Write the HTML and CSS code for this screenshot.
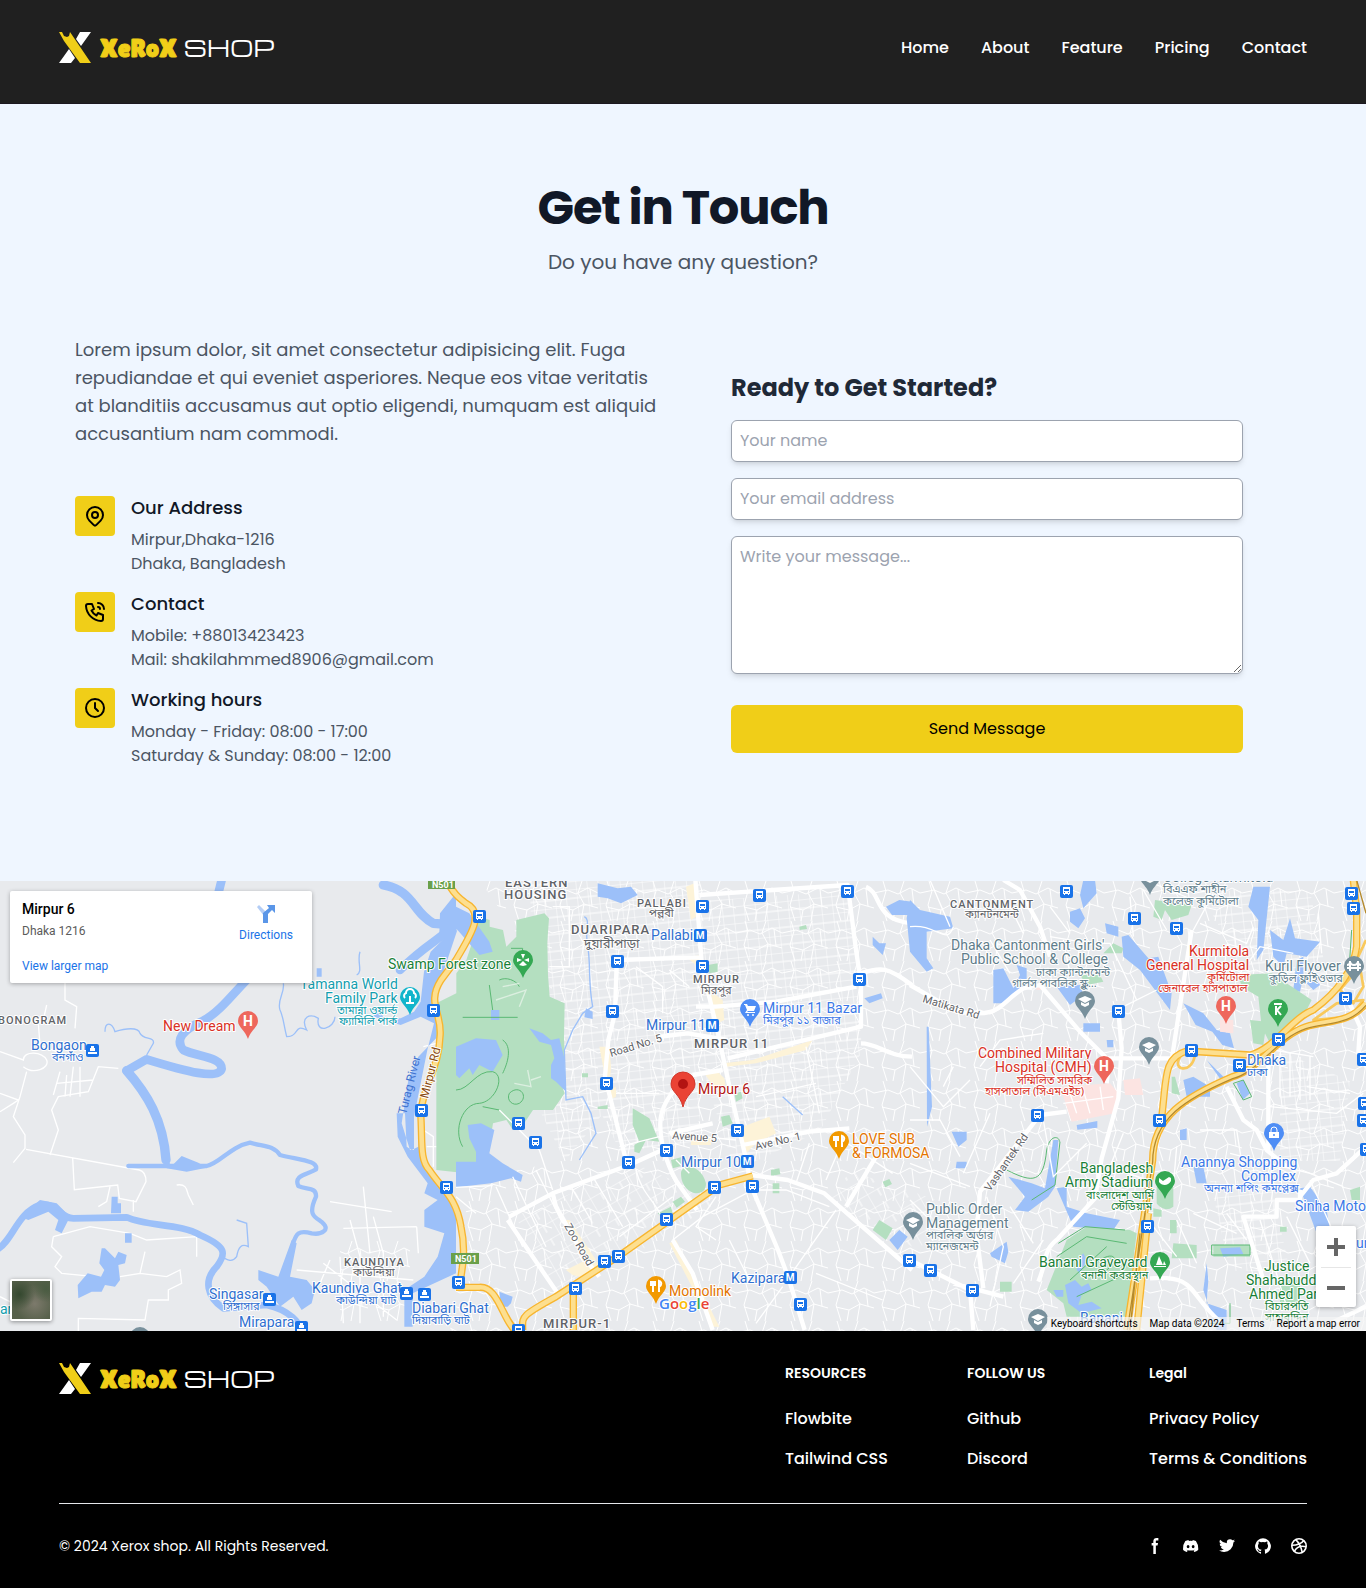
FILE: index.html
```html
<!DOCTYPE html>
<html lang="en">
<head>
<meta charset="utf-8">
<meta name="viewport" content="width=device-width, initial-scale=1">
<title>Xerox Shop - Contact</title>
<link rel="stylesheet" href="styles.css">
</head>
<body>
<header class="header">
  <div class="container header-row">
    <a class="logo" href="#" aria-label="Xerox Shop">
      <svg class="logo-mark" viewBox="0 0 32 32" aria-hidden="true"><path fill="#fff" d="M21 0h11L22 14l-5-7zM0 31l10-14 6 9-4 5z"/><path fill="#f0ce18" d="M0 0h3l2 4 3 1 2-1 1-4 21 31H21L5 9z"/></svg>
      <span class="logo-x">XeRoX</span><span class="logo-shop">SHOP</span>
    </a>
    <nav class="nav">
      <a href="#">Home</a><a href="#">About</a><a href="#">Feature</a><a href="#">Pricing</a><a href="#">Contact</a>
    </nav>
  </div>
</header>

<main>
  <section class="contact">
    <div class="intro">
      <h1>Get in Touch</h1>
      <p>Do you have any question?</p>
    </div>
    <div class="columns">
      <div class="info">
        <p class="lead">Lorem ipsum dolor, sit amet consectetur adipisicing elit. Fuga repudiandae et qui eveniet asperiores. Neque eos vitae veritatis at blanditiis accusamus aut optio eligendi, numquam est aliquid accusantium nam commodi.</p>
        <ul class="details">
          <li>
            <span class="badge"><svg viewBox="0 0 24 24"><circle cx="12" cy="11" r="3"/><path d="M17.657 16.657 13.414 20.9a2 2 0 0 1-2.827 0l-4.244-4.243a8 8 0 1 1 11.314 0z"/></svg></span>
            <div><h2>Our Address</h2><p>Mirpur,Dhaka-1216</p><p>Dhaka, Bangladesh</p></div>
          </li>
          <li>
            <span class="badge"><svg viewBox="0 0 24 24"><path d="M5 4h4l2 5-2.500 1.500a11 11 0 0 0 5 5L15 13l5 2v4a2 2 0 0 1-2 2A16 16 0 0 1 3 6a2 2 0 0 1 2-2M15 7a2 2 0 0 1 2 2M15 3a6 6 0 0 1 6 6"/></svg></span>
            <div><h2>Contact</h2><p>Mobile: +88013423423</p><p>Mail: shakilahmmed8906@gmail.com</p></div>
          </li>
          <li>
            <span class="badge"><svg viewBox="0 0 24 24"><circle cx="12" cy="12" r="9"/><path d="M12 7v5l3 3"/></svg></span>
            <div><h2>Working hours</h2><p>Monday - Friday: 08:00 - 17:00</p><p>Saturday &amp; Sunday: 08:00 - 12:00</p></div>
          </li>
        </ul>
      </div>
      <form class="form">
        <h2>Ready to Get Started?</h2>
        <input type="text" placeholder="Your name" aria-label="Your name">
        <input type="email" placeholder="Your email address" aria-label="Your email address">
        <textarea placeholder="Write your message..." aria-label="Write your message"></textarea>
        <button type="button">Send Message</button>
      </form>
    </div>
  </section>

  <section class="map" aria-label="Map of Mirpur 6">
    <svg class="canvas" viewBox="0 0 1366 450" preserveAspectRatio="xMidYMid slice">
      <defs>
        <pattern id="blocks" width="11" height="17" patternUnits="userSpaceOnUse" patternTransform="rotate(-6)"><path class="lane" d="M0 0h11M0 0v17M0 9h11"/></pattern>
        <pattern id="blocks-tilt" width="22" height="15" patternUnits="userSpaceOnUse" patternTransform="rotate(-30)"><path class="lane" d="M0 0h22M0 0v15M12 0v8"/></pattern>
        <pattern id="lanes" width="46" height="40" patternUnits="userSpaceOnUse"><path class="lane" d="M0 12l14-3 10 4 12-6 10 5M9 0l3 10-4 14 5 16M30 0l-4 12 6 11-3 17M8 26l13 3 11-6 14 4M21 29l-2 11M38 8l2 17"/></pattern>
        <g id="bus"><rect class="stop" x="-6" y="-6" width="13" height="13" rx="2"/><path fill="#fff" d="M-3-4h7v7h-1v1h-1v-1h-3v1h-1v-1h-1z"/><path fill="#1a73e8" d="M-2-2h5v2h-5zM-2 1h1v1h-1zM2 1h1v1h-1z"/></g>
        <g id="ferry"><rect class="stop" x="-6" y="-6" width="13" height="13" rx="2"/><path fill="#fff" d="M-1-4h3v2h1v3h-5v-3h1zM-4 2h9v2h-9z"/></g>
        <g id="metro"><rect class="stop" x="-6" y="-6" width="13" height="13" rx="2"/><text class="glyph" x="0" y="4">M</text></g>
        <path id="pin" d="M0-10a10 10 0 0 1 10 10c0 6-7 9-10 18C-3 9-10 6-10 0A10 10 0 0 1 0-10z"/>
        <g id="school"><use href="#pin" fill="#78909c"/><path fill="#fff" d="M0-5l7 3-7 4-7-4zM-4 1l4 2 4-2v3l-4 2-4-2z"/></g>
        <g id="hospital"><use href="#pin" fill="#ee675c"/><text class="glyph big" x="0" y="5">H</text></g>
        <g id="food"><use href="#pin" fill="#f29900"/><path fill="none" stroke="#fff" stroke-width="2" d="M-3-5v11M-5-5v4h4v-4M3 6V-5c3 1 3 4 0 6"/></g>
      </defs>
      <rect width="1366" height="450" fill="#e8eaed"/>
      <path fill="url(#lanes)" d="M480 0H1366V450H450L470 300 560 280 550 100z"/>
      <path fill="url(#blocks)" d="M565 0H700V260L620 270 560 150zM700 20L850 10 862 170 820 250 735 290 690 150zM530 0h35v150l40 80-40 50-30-60zM1200 10l110 0 20 100-60 30zM1280 170l70 30-10 80-60 0zM1210 300l60 0 20 90-60 0z"/>
      <path fill="url(#blocks-tilt)" d="M515 335L640 285 720 320 560 420zM850 290l90 30-20 50-90-50z"/>
      <path fill="url(#lanes)" d="M340 360h70v80h-70z"/>

      <svg class="tile" x="0" y="-1" width="456" height="450" viewBox="0 0 1368 1350">
        <path class="minor" d="M195 300v60l35 20-5 65M140 375l-10 45-15 10 5 65 50 20M0 515l70 25c0-30 60-25 70 0 10 25-40 45-70 20M80 575L60 650 40 710l35 55v40L40 848M0 640l55 20-15 10-40 25M78 808l340 62c20 5 20 25 20 35l-30 60-50-10-5-40-130 14-5-95M150 825l25-75-20-60 20-40 90-15 30-75 60 5M180 575l-20 70M200 585l-5 65M220 560l-10 90M240 560v90M170 610l110-10M530 915c30-5 30 15 35 30l15 30M330 920l-10 45-25 15M400 960v35M990 965l185 30M1090 920l20 200M1030 1045l220-5M1050 1020l30 110M1120 1010l30 110M1250 1040l5 80M970 1150l220 170M890 1170l350 30M960 1210l30-70M1020 1130l10 200M1080 1130v200M1150 1110v200M160 1070l110-30 120 20 50 20 150-10v60M160 1070l-5 30 30 30-20 30 20 20 100 10M360 1190l60-10 15-65M420 1180l80 10 40-20 5 40-40 20v30l-60 0-10 60-200-5v60M0 1250l40 20M1270 500l60-15M1270 750l30 20v90M1280 800h35"/>
        <path class="brook" d="M315 455c0-30 20-30 30 0 30-10 70-15 75 5 10 20 45 10 40 30l-20 35M850 310c5 30-20 50-10 80 10 20 10 40 20 80 40 0 20-40 60-20-20-40 10-50 35-35-10 50 50 30 50-5M1080 215c-10 30 10 60-10 70M630 1180c-10 20 10 50 15 80M710 1020l30 10 5 70c-20-10-30 0-35 30-15 20-30 10-50-5"/>
        <path class="water" stroke-width="26" d="M665 0l-15 60M740 300C700 340 660 395 610 422 545 450 525 480 550 510 590 530 665 530 665 566 655 600 560 575 440 538L380 572M1200 270C1280 190 1320 180 1368 130"/>
        <path class="water" stroke-width="28" d="M380 572C440 640 490 720 498 840M1150 15C1240 30 1240 100 1300 130L1368 135"/>
        <path class="water" stroke-width="13" d="M385 858L620 858C660 850 690 800 750 788 790 800 820 795 840 825 900 840 955 842 948 868 920 885 880 885 895 918 920 930 950 920 948 950 925 1000 940 1010 960 1022 1000 1050 960 1065 935 1060 895 1050 888 1060 878 1095"/>
        <path class="water" stroke-width="20" d="M-10 1110C40 1080 50 1000 120 975 170 965 180 1015 220 1015L380 1012C440 1040 540 1030 600 1065 680 1100 680 1120 650 1160 610 1200 620 1250 670 1285L800 1275C870 1290 900 1330 910 1360"/>
        <path class="lake" d="M495 830l20 28 30-30 50 20 25 15-60 12-60-10zM875 1080l15 10-20 100 50 10 25 30-10 40-30 20-25-40-40 30-40-60-25-20 0-30 60 20zM60 1010l60-50 50 10 40 40-25 50-20-10 10-30-30-25-60 25zM335 950h18v20h10l0 30h-30zM375 1060h20v28h-20zM305 1105l10 0 30 30 10-20 25 10-5 25-20 5 5 45-15 20-30-5-10 20-30 0-40 20-2-40 30-35 40 10 10-20-15-20zM950 265h15v25h-15z"/>
        <path class="lake" d="M1255 530l-30 70-20 130 25 80h12l0-100 40-200 20-80-40-20-60 25-80-25-5-30 15 0 20 35 50 0 40-20 20-30 10-90 20-60 60-60 20-5-50 150-20 90 30 60zM1190 700l25 0 5 100 15 10 20-10 0-80 15 140 98 100v220l-130 60v100h-25v-110l60-40 40-60 20-70-60-20 0-50 40-30-40-20 10-30-60-80-30-60z"/>
        <path class="lake" d="M1320 100l48-60v120l-50 0zM1325 510l40 0-20 30-20 0z"/>
        <path class="park" d="M1320 395l48-10v75l-45-10zM1330 560l38 20v275h-48z"/>
        <path class="park-line" d="M1340 850c-10-60 5-130-5-180 0-20 20-40 33-38"/>
      </svg>

      <svg class="tile" x="456" y="-1" width="456" height="450" viewBox="0 0 1368 1350">
        <path class="park" d="M265 100l14 15-5 70 2 100 5 65 45 20-2 100 2 60-25 40 25 70-35 50-60 0-40 60-20 0-20-30-40 10-20 130-60 20-90-10V370l60-30 0-60 30-40 20-60 0-20 20-50 30 10 0 20 40 10 10 50 30-30 0-50z"/>
        <path class="lake" d="M0 80l40 20 60 85 10 30-40 10-70-80zM0 500l60-25 60 5 20 45-30 50-40-20-20 30-10-20-30 30-10-10zM220 445l40 15 25 20 25-5 15 60 5 100-30-30-15-10 0-40 10-20-10-40-35-10zM35 735l40-5 40 20-15 70 40 30 60 35-5 20-30-10-60 15L0 922V845l60 0 0-30-20-40zM425 10l60 15 40-5 20 25-50 25-40-15-30-5zM105 390h25v30h-25zM390 385l20 10v22l-25-5zM1290 80l40-20 38 5v40l-60 0zM1250 170l20 20 20 0-10 35-30-30zM1225 355l50-15 5 15-40 15zM1300 1080l30-30 25 20-30 40zM130 1235l40 15-5 20-10 10-20 0z"/>
        <path class="park" d="M530 685l50 30 30 70-40-5-20 40-15-5 0-20 15-10-20-50zM675 880c0-30 60-30 75 30 0 30-25 35-45 25-20-10-30-30-30-55zM645 840l35-10 8 25-38 10zM755 255l30-5 0 25-25 5zM795 710l25-5 10 25-30 10zM835 640l20-5 5 20-20 10zM945 870l25-5 3 18-28 5zM950 910h20v30h-20zM650 965l25-15 12 15-25 18zM605 1000l40-20 5 20-35 10zM1250 1050l20-30 40 25 -20 35zM1280 905l20-8 8 15-20 10zM1030 140l20-5 3 12-22 3zM425 680l30-5v12h-30zM378 580h18v12h-18z"/>
        <path class="town" d="M690 20l25-10 5 100-15 10zM760 330l40 30 5 60-30 15zM800 550l90-10 180-60-20 30-150 40-90 10zM745 580l40-5 20 20 5 30-30 5zM860 740l80-30 20 50-60 30-40 40zM430 500h30l5 60-5 70 20-10 0 30-20 10zM705 770h60v25h-60zM330 1170l60-30 50 10-10 30-60 10-20-5zM640 1090l20-10 130 260h-20zM320 1020l20 0 80 120-20 10zM690 230l50-5 0 30-20 0z"/>
        <path class="brook" d="M385 110c20 10 0 40 10 90 10 50 0 100 15 180l-30 20-30 50-25 60 5 150 50-10 25 50 15 60-50 80M980 650l60 55"/>
        <path class="park-line" d="M0 630c40 0 60-60 110-55 40 10 10 90-40 95-50 0-80 80-50 130M20 412l165 0M100 315l10 75M140 480c30 20 15 70 0 100M160 640c30-30 60 10 30 30-20 10-40-10-30-30M165 205h35l-5 40M80 680l50 10M130 300c20-10 50 0 60 20"/>
        <path class="path" d="M120 360l90-30-20 50M215 570l10 50-50-10M225 600l30-10M140 320l50-10"/>
        <path class="minor" d="M130 690l60 60 60 60 40 120M160 1010l0 20 60 80M290 80h50v180h-60M0 922l110-5M60 1000l-60-50M120 920l80 180M170 890l100 210M240 870l80 160M345 920l60 100M410 890l90 150M490 1070l160-120M520 1100l150-110M540 870c20 80 60 90 80 150M900 650l180-40M1050 500l40 200M1130 760l180 120M1020 910l40-120M1110 900l60-140M540 260l80 60v80M640 270l60 50M490 800l120-30M640 760l200 20M480 640h130M660 840l40 40M650 1080l90-70 150-80 100 0 130 50M780 950l-60 90 60 40M1000 1190l140-200M820 1080l60 120M900 1330l80-110M1080 1180l200 80"/>
        <path class="road" d="M718 0l20 260 48 200 30 140 50 220 20 100 80 190 30 80 50 160M730 45L1175 15 1200 210 1215 310 1215 440 815 535M720 380h60l180-15 240-45M480 240l250-8M482 250l-5 150-20 80-10 110 30 120 35 140M160 1010l130-70 230-85 110-50M710 585l90-15M690 610c-50 20-80 80-77 130 0 60 30 140 60 180l50 70M290 940l10 40 90 160 40 50M155 1020l150 220M640 760l130-30M860 795l200-40 120-10M815 480l-120-20-80 10M650 1080l60 100 60 170M885 885l110 15 110 40 160 140 103 90M1170 980l90-150M1215 280c60-20 80-20 153 35M1230 20c50 20 20 100 138 110M1215 490c50 0 80 40 153 40"/>
        <path class="highway-edge" d="M-28 0C-10 40 10 55 30 70 90 100 40 170 0 240L-45 300C-90 370-40 400-48 470-50 560-100 620-106 700-100 780-110 840-80 870-40 930 0 950 15 1040 30 1110 20 1160 10 1220M0 1222h70c60-5 70 110 120 140M200 1350c0-40-10-40 100-100L500 1120 740 950 790 915 890 888M352 1240v110"/>
        <path class="highway" d="M-28 0C-10 40 10 55 30 70 90 100 40 170 0 240L-45 300C-90 370-40 400-48 470-50 560-100 620-106 700-100 780-110 840-80 870-40 930 0 950 15 1040 30 1110 20 1160 10 1220M0 1222h70c60-5 70 110 120 140M200 1350c0-40-10-40 100-100L500 1120 740 950 790 915 890 888M352 1240v110"/>
      </svg>

      <svg class="tile" x="910" y="-1" width="456" height="450" viewBox="0 0 1368 1350">
        <path class="lake" d="M0 60l30 30 90 20 10 35-80 10 0 80 20 30-20 10-50-60-10-100zM520 0h35l5 40-40 45-10-40zM480 95l30-10 15 30-20 30-25-20zM585 130l40 10 0 30-35-10zM635 170l20-5 60 70 30-5 40 110-5 50-30-40-60-80-50-40zM250 270l30-5 30 60 20-40-10-30 30 10 0 50-60 55-40 0zM440 320l70-5 10 30-40 30zM820 370l60 30 40 50 40 10 12 45-35-10-30-40-50-20zM1030 20l50 0-20 190-20 30 5-120-30-40zM1080 150l40 30 20-65 15 60 75 10-40 45-60-10-10 40-30-30zM1160 240l20-10 0 60-10 45-20-5zM1190 310l30-20 10 25-20 15zM520 430l50 0 0 25-50 0zM590 480l20 0 0 22-18 0zM50 440h6l10 240-15 60zM125 755l45 0 0 25-25 20zM140 845l30 0 0 20-33 0zM500 735l62-12 0 20-60 6zM430 780h15l-10 140-20 30-60 45-40-5 30-40-50-60 70 20 40 15zM440 925l30-5 0 60 60 20 100 20-20 30-120-10zM240 1120l50-35 5 30-10 35-40-20zM820 600l30-10 50 30 0 30-70 0zM810 750l20-5 0 35h-20zM850 860h30l10 50h-30zM1170 925l30-5 50 70 10 60-40 10zM890 1150l5 50-5 70 60 20v60h-30l-20-60-20-60zM890 540l60 60-10 10zM550 1140h10v10h-10z"/>
        <path class="park" d="M985 285l100-5 120 80-20 40-90 90-10 10-30-60-10-90-50-30zM1020 420l50 5-10 70-30-5zM735 60l110 15-10 30-50 15-20-30-10 30-25-10zM580 220l30-30 30 15-5 15zM510 285l60 0 10 20-50 10zM740 920h50v60c-20 15-40 5-50-10zM470 1080l60-40 130 10 20 10-20 160-10 90-60 0-120 0-10-40-50-40zM910 1095l110 0v35h-110zM790 1090l70 5 0 40-75 0zM780 1020h20v40h-20zM730 985l25 5v20h-25zM785 590l10 0 15 55-25-5zM270 1205h35v30h-35zM1110 1040h20v15h-20zM1320 930l30-10v40l-25 0zM1110 1200h60v80h-60z"/>
        <path class="lake" d="M930 1105l60-3 10 20-60 8zM980 610l20-10 20 40-22 20zM430 1230h30v20h-20zM465 1215l30-15 20 20 20-10 10 20-30 15-10 30 40-10 30 20-60 15-40-30zM510 1130l10-10 10 20-20 40-10-10z"/>
        <path class="clinic" d="M450 620l150-10 25 30-10 60-130 25zM640 600l50-5 10 50-55 0zM930 420l40 0 0 40-40-5zM370 310l30 0 0 20-20 0z"/>
        <path class="park-line" d="M290 870c80 40 110 40 120-60 10-50 40-40 38-25M450 785l-15 130-70 45M445 1090l80-50 120 10M440 1130l90-60 120 20M480 1200l110-100M500 1250l130-60M560 1150c40-40 80-20 30 20M1225 370l90-70 10-150M970 610l30-10 25 50-25 10zM905 1095h115v30h-115zM960 1270v60h-60"/>
        <path class="minor" d="M0 140c80-10 110 60 130 0M420 170l120 20 60 0 80 170M640 380l100-50M850 150l60-110M850 60l-120-50M870 130l140 60 20-50M400 460l-130 20-60 80M0 560l100 120 80-80M0 720l90 0 60 110M130 560l-30 60M240 700l-80 180M400 720l30 170 100-100M640 760l-40 100 110 40M800 800l-10 120M870 750l110 0 20 130M960 820l240 60 100 40M1080 680l200 20 80-60M1090 510l120 20M1110 520v130M1140 520v130M1170 530v130M1200 530v130M1225 100l10 120M1190 620l130 20M990 280l60-80 100 20M950 1000l60 80M800 1020l60 130M850 1000l130 60M0 850l180 70M0 960l60 60M230 950l50 150-40 180M300 980l70 110M400 1080l-90 130M730 1040l70 90M1050 1020l80 260M1130 1010l70 140M1200 900l90 200M290 60l50 100M60 0l60 140M420 80l60 80M460 180l20 100M240 180l60 100M660 50l10 120M700 30l70 120M480 640l20 60M520 630l20 70M460 670l150-20M570 620l10 70"/>
        <path class="road" d="M280 0l50 30 60 110 30 90M0 315l140 80c140 20 120-20 200-70l50-10 120 140 80 80h200M845 150l-60 390M625 395l10 110-10 150-50 180-20 120-110 120c-50 40-30 60-60 130M470 695l-80 10-180 230-10 130 20 160M770 560l-20 170M600 530l-10 80M0 1140l180 90 10 120M130 1210l150 40M950 620l50 100 40 30 30 60 60 50M1075 520v290M1170 950l40-50 70-20 88-80M1170 930l0 30-70 0v50l-100 0 60 190M720 1195c140-10 110 40 210 130M1310 350l40 90-5 80 23 40M1240 1340l128-60"/>
        <path class="ramp" d="M820 520c-50 50 30 70 35 0M1210 420l70-50 80-10-40 50zM1290 330l60-70 10 60-30 50zM1340 240l28-60"/>
        <path class="highway-edge" d="M1330 0l10 90 0 110c-10 70-50 130-130 190-60 20-120 120-190 135l-190-12c-70 20-60 80-75 200M1368 370c-50 60-110 50-180 70-90 30-140 130-220 150-140 60-240 120-240 250L650 1350"/>
        <path class="highway" d="M1330 0l10 90 0 110c-10 70-50 130-130 190-60 20-120 120-190 135l-190-12c-70 20-60 80-75 200M1368 370c-50 60-110 50-180 70-90 30-140 130-220 150-140 60-240 120-240 250L650 1350"/>
        <path class="highway-edge" d="M715 1000l-35 350"/>
        <path class="highway" d="M715 1000l-35 350"/>
        <path class="rail" d="M1340 0l28 100M1368 376c-50 60-110 50-180 70-90 30-140 130-220 150-140 60-240 120-240 250L652 1350M690 1060l-30 290"/>
      </svg>

      <g class="halo">
        <g class="area">
          <text x="505" y="6">EASTERN</text><text x="504" y="18">HOUSING</text><text x="571" y="53">DUARIPARA</text><text x="694" y="167">MIRPUR 11</text><text x="543" y="447">MIRPUR-1</text>
          <g class="small"><text x="637" y="26">PALLABI</text><text x="693" y="102">MIRPUR</text><text x="950" y="27">CANTONMENT</text><text x="-2" y="143">BONOGRAM</text><text x="344" y="385">KAUNDIYA</text></g>
          <g class="bn"><text x="649" y="36">পল্লবী</text><text class="bn-large" x="584" y="67">দুয়ারীপাড়া</text><text x="701" y="113">মিরপুর</text><text x="965" y="37">ক্যানটনমেন্ট</text><text x="353" y="395">কাউন্দিয়া</text></g>
        </g>
        <g class="transit">
          <text x="31" y="169">Bongaon</text><text x="651" y="59">Pallabi</text><text x="646" y="149">Mirpur 11</text><text x="681" y="286">Mirpur 10</text><text x="731" y="402">Kazipara</text><text x="1247" y="184">Dhaka</text><text x="209" y="418">Singasar</text><text x="239" y="446">Mirapara</text><text x="312" y="412">Kaundiya Ghat</text><text x="412" y="432">Diabari Ghat</text><text x="1080" y="442">Banani</text>
          <g class="bn"><text x="52" y="180">বনগাঁও</text><text x="223" y="429">সিঙ্গাসার</text><text x="336" y="423">কাউন্দিয়া ঘাট</text><text x="412" y="443">দিয়াবাড়ি ঘাট</text><text x="1247" y="195">ঢাকা</text></g>
        </g>
        <g class="shop"><text x="763" y="132">Mirpur 11 Bazar</text><text x="1181" y="286">Anannya Shopping</text><text x="1241" y="300">Complex</text><text x="1295" y="330">Sinha Motors</text><text x="1356" y="367">un</text><g class="bn"><text x="763" y="143">মিরপুর ১১ বাজার</text><text x="1204" y="311">অনন্যা শপিং কমপ্লেক্স</text></g></g>
        <g class="nature"><text x="388" y="88">Swamp Forest zone</text><text x="1080" y="292">Bangladesh</text><text x="1065" y="306">Army Stadium</text><text x="1039" y="386">Banani Graveyard</text><text x="1264" y="390">Justice</text><text x="1246" y="404">Shahabuddin</text><text x="1249" y="418">Ahmed Park</text><g class="bn"><text x="1086" y="318">বাংলাদেশ আর্মি</text><text x="1111" y="329">স্টেডিয়াম</text><text x="1081" y="398">বনানী কবরস্থান</text><text x="1265" y="429">বিচারপতি</text><text x="1265" y="440">সাহাবুদ্দিন</text></g></g>
        <g class="fun"><text x="300" y="108">Tamanna World</text><text x="325" y="122">Family Park</text><text x="0" y="433">ar</text><g class="bn"><text x="337" y="133">তামান্না ওয়ার্ল্ড</text><text x="339" y="144">ফ্যামিলি পার্ক</text></g></g>
        <g class="health"><text x="163" y="150">New Dream</text><text x="1189" y="75">Kurmitola</text><text x="1146" y="89">General Hospital</text><text x="978" y="177">Combined Military</text><text x="995" y="191">Hospital (CMH)</text><g class="bn"><text x="1207" y="100">কুর্মিটোলা</text><text x="1158" y="111">জেনারেল হাসপাতাল</text><text x="1017" y="203">সম্মিলিত সামরিক</text><text x="985" y="214">হাসপাতাল (সিএমএইচ)</text></g></g>
        <g class="civic"><text x="951" y="69">Dhaka Cantonment Girls'</text><text x="961" y="83">Public School &amp; College</text><text x="926" y="333">Public Order</text><text x="926" y="347">Management</text><text x="1265" y="90">Kuril Flyover</text><text x="1163" y="1">College Kurmitola</text><g class="bn"><text x="1036" y="95">ঢাকা ক্যান্টনমেন্ট</text><text x="1012" y="106">গার্লস পাবলিক স্কুল…</text><text x="926" y="358">পাবলিক অর্ডার</text><text x="926" y="369">ম্যানেজমেন্ট</text><text x="1269" y="101">কুড়িল ফ্লাইওভার</text><text x="1163" y="12">বিএএফ শাহীন</text><text x="1163" y="24">কলেজ কুর্মিটোলা</text></g></g>
        <g class="dining"><text x="852" y="263">LOVE SUB</text><text x="852" y="277">&amp; FORMOSA</text><text x="669" y="415">Momolink</text></g>
        <text class="place" x="698" y="213">Mirpur 6</text>
        <g class="street"><text transform="translate(611 176) rotate(-17)">Road No. 5</text><text transform="translate(672 258) rotate(4)">Avenue 5</text><text transform="translate(756 269) rotate(-13)">Ave No. 1</text><text transform="translate(564 345) rotate(60)">Zoo Road</text><text transform="translate(922 121) rotate(17)">Matikata Rd</text><text transform="translate(990 311) rotate(-55)">Vashantek Rd</text></g>
        <text class="route" transform="translate(428 218) rotate(-76)">Mirpur Rd</text>
      </g>
      <text class="river" transform="translate(406 234) rotate(-76)">Turag River</text>
      <g class="shield"><rect x="428" y="-2" width="27" height="10"/><text x="432" y="7">N501</text><rect x="451" y="372" width="28" height="11"/><text x="455" y="381">N501</text></g>

      <g>
        <use href="#bus" x="433" y="129"/><use href="#bus" x="421" y="229"/><use href="#bus" x="446" y="306"/><use href="#bus" x="479" y="35"/><use href="#bus" x="759" y="14"/><use href="#bus" x="702" y="25"/><use href="#bus" x="847" y="10"/><use href="#bus" x="617" y="80"/><use href="#bus" x="702" y="85"/><use href="#bus" x="859" y="98"/><use href="#bus" x="612" y="130"/><use href="#bus" x="606" y="202"/><use href="#bus" x="737" y="249"/><use href="#bus" x="518" y="242"/><use href="#bus" x="535" y="261"/><use href="#bus" x="666" y="269"/><use href="#bus" x="628" y="281"/><use href="#bus" x="714" y="306"/><use href="#bus" x="752" y="305"/><use href="#bus" x="666" y="338"/><use href="#bus" x="618" y="375"/><use href="#bus" x="604" y="380"/><use href="#bus" x="575" y="407"/><use href="#bus" x="458" y="401"/><use href="#bus" x="518" y="449"/><use href="#bus" x="800" y="423"/><use href="#bus" x="1066" y="10"/><use href="#bus" x="1134" y="37"/><use href="#bus" x="1176" y="47"/><use href="#bus" x="1351" y="12"/><use href="#bus" x="1353" y="27"/><use href="#bus" x="1118" y="130"/><use href="#bus" x="1191" y="169"/><use href="#bus" x="1278" y="158"/><use href="#bus" x="1345" y="117"/><use href="#bus" x="1239" y="184"/><use href="#bus" x="1037" y="234"/><use href="#bus" x="1159" y="239"/><use href="#bus" x="1363" y="178"/><use href="#bus" x="1364" y="222"/><use href="#bus" x="1363" y="239"/><use href="#bus" x="1366" y="268"/><use href="#bus" x="1147" y="345"/><use href="#bus" x="930" y="389"/><use href="#bus" x="972" y="409"/><use href="#bus" x="909" y="379"/>
        <use href="#metro" x="700" y="54"/><use href="#metro" x="712" y="144"/><use href="#metro" x="747" y="280"/><use href="#metro" x="790" y="396"/>
        <use href="#ferry" x="92" y="169"/><use href="#ferry" x="269" y="418"/><use href="#ferry" x="301" y="446"/><use href="#ferry" x="406" y="412"/><use href="#ferry" x="424" y="413"/>
        <use href="#hospital" x="248" y="140"/><use href="#hospital" x="1226" y="125"/><use href="#hospital" x="1104" y="185"/>
        <use href="#school" x="1085" y="120"/><use href="#school" x="1149" y="166"/><use href="#school" x="913" y="341"/><use href="#school" x="1038" y="438"/><use href="#school" x="1150" y="-4"/><use href="#school" x="140" y="456"/>
        <use href="#food" x="839" y="260"/><use href="#food" x="656" y="405"/>
        <g transform="translate(410 116)"><use href="#pin" fill="#12b5cb"/><path fill="none" stroke="#fff" stroke-width="2" d="M0-1v7M-4 6h8M-5 1a3 3 0 0 1 1-5 4 4 0 0 1 8 0 3 3 0 0 1 1 5"/></g>
        <g transform="translate(523 79)"><use href="#pin" fill="#34a853"/><g fill="#fff"><path d="M0-1l-2-5h4zM1 0l5-2v4zM0 1l4 4-4 1zM0 1l-4 4 4 1zM-1 0l-5-2v4z"/></g></g>
        <g transform="translate(750 128)"><use href="#pin" fill="#4e8df5"/><path fill="#fff" d="M-6-5h3l1 2h8l-2 5h-6l-1 1h8v1h-10l2-3-2-5h-1z"/><circle cx="-2" cy="6" r="1" fill="#fff"/><circle cx="3" cy="6" r="1" fill="#fff"/></g>
        <g transform="translate(1274 252)"><use href="#pin" fill="#4e8df5"/><path fill="#fff" d="M-5-1H5v6H-5z"/><path fill="none" stroke="#fff" d="M-3-1v-2a3 3 0 0 1 6 0v2"/><circle cy="2" r="1" fill="#4e8df5"/></g>
        <g transform="translate(1354 85)"><use href="#pin" fill="#78909c"/><path fill="none" stroke="#fff" stroke-width="2" d="M-4-5v10M4-5v10M-7 2H7M-7-1c3 0 3-2 3-3 1 4 7 4 8 0 0 1 0 3 3 3"/></g>
        <g transform="translate(1278 128)"><use href="#pin" fill="#34a853"/><path fill="none" stroke="#fff" stroke-width="2" d="M-4-5h8M-2-3v9M3-3l-4 4 4 5"/></g>
        <g transform="translate(1165 300)"><use href="#pin" fill="#34a853"/><path fill="#fff" d="M-6-3l4 3 6-4 2 1v3c-3 5-9 5-12 1z"/></g>
        <g transform="translate(1160 381)"><use href="#pin" fill="#34a853"/><path fill="#fff" d="M-1-6l4 9h-7zM4-1l2 4h-3zM-6 4H6v1H-6z"/></g>
        <path fill="#ea4335" stroke="#d2382b" d="M683 191a12 12 0 0 1 12 12c0 8-9 10-12 23-3-13-12-15-12-23a12 12 0 0 1 12-12z"/><circle cx="683" cy="203" r="5" fill="#b31412"/>
      </g>
      <text class="google" x="659" y="428"><tspan fill="#4285f4">G</tspan><tspan fill="#ea4335">o</tspan><tspan fill="#fbbc04">o</tspan><tspan fill="#4285f4">g</tspan><tspan fill="#34a853">l</tspan><tspan fill="#ea4335">e</tspan></text>
    </svg>

    <div class="place-card">
      <div class="place-text"><strong>Mirpur 6</strong><span>Dhaka 1216</span><a href="#">View larger map</a></div>
      <a class="directions" href="#"><svg viewBox="0 0 20 20" aria-hidden="true"><path fill="#b3cdf6" d="M1 3l2-2 8 8-3 3z"/><path fill="#5a96e8" d="M11 1h8v8l-3-3-4 4v9H7V9l6-5z"/></svg>Directions</a>
    </div>
    <button class="satellite" type="button" aria-label="Show satellite imagery"></button>
    <div class="zoom"><button type="button" aria-label="Zoom in"><svg viewBox="0 0 18 18"><path d="M7 0h4v7h7v4h-7v7H7v-7H0V7h7z"/></svg></button><button type="button" aria-label="Zoom out"><svg viewBox="0 0 18 18"><path d="M0 7h18v4H0z"/></svg></button></div>
    <div class="credits"><a href="#">Keyboard shortcuts</a><span>Map data ©2024</span><a href="#">Terms</a><a href="#">Report a map error</a></div>
  </section>
</main>

<footer class="footer">
  <div class="container">
    <div class="footer-top">
      <a class="logo" href="#" aria-label="Xerox Shop">
        <svg class="logo-mark" viewBox="0 0 32 32" aria-hidden="true"><path fill="#fff" d="M21 0h11L22 14l-5-7zM0 31l10-14 6 9-4 5z"/><path fill="#f0ce18" d="M0 0h3l2 4 3 1 2-1 1-4 21 31H21L5 9z"/></svg>
        <span class="logo-x">XeRoX</span><span class="logo-shop">SHOP</span>
      </a>
      <div class="links">
        <div><h2>RESOURCES</h2><a href="#">Flowbite</a><a href="#">Tailwind CSS</a></div>
        <div><h2>FOLLOW US</h2><a href="#">Github</a><a href="#">Discord</a></div>
        <div><h2>Legal</h2><a href="#">Privacy Policy</a><a href="#">Terms &amp; Conditions</a></div>
      </div>
    </div>
    <hr>
    <div class="footer-bottom">
      <p>© 2024 Xerox shop. All Rights Reserved.</p>
      <div class="social">
        <a href="#" aria-label="Facebook"><svg viewBox="0 0 8 19"><path fill-rule="evenodd" d="M6.135 3H8V0H6.135a4.147 4.147 0 0 0-4.142 4.142V6H0v3h2v9.938h3V9h2.021l.592-3H5V3.591A.6.600 0 0 1 5.592 3h.543Z"/></svg></a>
        <a href="#" aria-label="Discord"><svg viewBox="0 0 21 16"><path d="M16.942 1.556a16.300 16.300 0 0 0-4.126-1.300 12.040 12.040 0 0 0-.529 1.100 15.175 15.175 0 0 0-4.573 0 11.585 11.585 0 0 0-.535-1.100 16.274 16.274 0 0 0-4.129 1.300A17.392 17.392 0 0 0 .182 13.218a15.785 15.785 0 0 0 4.963 2.521c.410-.564.773-1.160 1.084-1.785a10.630 10.630 0 0 1-1.706-.830c.143-.106.283-.217.418-.330a11.664 11.664 0 0 0 10.118 0c.137.113.277.224.418.330-.544.328-1.116.606-1.710.832a12.520 12.520 0 0 0 1.084 1.785 16.460 16.460 0 0 0 5.064-2.595 17.286 17.286 0 0 0-2.973-11.590ZM6.678 10.813a1.941 1.941 0 0 1-1.800-2.045 1.930 1.930 0 0 1 1.800-2.047 1.919 1.919 0 0 1 1.800 2.047 1.930 1.930 0 0 1-1.800 2.045Zm6.644 0a1.940 1.940 0 0 1-1.800-2.045 1.930 1.930 0 0 1 1.800-2.047 1.918 1.918 0 0 1 1.800 2.047 1.930 1.930 0 0 1-1.800 2.045Z"/></svg></a>
        <a href="#" aria-label="Twitter"><svg viewBox="0 0 20 17"><path d="M20 1.892a8.178 8.178 0 0 1-2.355.635 4.074 4.074 0 0 0 1.800-2.235 8.344 8.344 0 0 1-2.605.980A4.130 4.130 0 0 0 13.850 0a4.068 4.068 0 0 0-4.100 4.038 4 4 0 0 0 .105.919A11.705 11.705 0 0 1 1.400.734a4.006 4.006 0 0 0 1.268 5.392 4.165 4.165 0 0 1-1.859-.500v.050A4.057 4.057 0 0 0 4.100 9.635a4.190 4.190 0 0 1-1.856.070 4.108 4.108 0 0 0 3.831 2.807A8.360 8.360 0 0 1 0 14.184 11.732 11.732 0 0 0 6.291 16 11.502 11.502 0 0 0 17.964 4.500c0-.177 0-.350-.012-.523A8.143 8.143 0 0 0 20 1.892Z"/></svg></a>
        <a href="#" aria-label="GitHub"><svg viewBox="0 0 20 20"><path d="M10 .333A9.911 9.911 0 0 0 6.866 19.650c.500.092.678-.215.678-.477 0-.237-.010-1.017-.014-1.845-2.757.600-3.338-1.169-3.338-1.169a2.627 2.627 0 0 0-1.100-1.451c-.900-.615.070-.600.070-.600a2.084 2.084 0 0 1 1.518 1.021 2.110 2.110 0 0 0 2.884.823c.044-.503.268-.973.630-1.325-2.200-.250-4.516-1.100-4.516-4.900A3.832 3.832 0 0 1 4.700 7.068a3.560 3.560 0 0 1 .095-2.623s.832-.266 2.726 1.016a9.409 9.409 0 0 1 4.962 0c1.890-1.282 2.717-1.016 2.717-1.016.366.830.402 1.768.100 2.623a3.827 3.827 0 0 1 1.020 2.659c0 3.807-2.319 4.644-4.525 4.889a2.366 2.366 0 0 1 .673 1.834c0 1.326-.012 2.394-.012 2.721 0 .263.180.572.681.475A9.911 9.911 0 0 0 10 .333Z"/></svg></a>
        <a href="#" aria-label="Dribbble"><svg viewBox="0 0 20 20"><g fill="none" stroke="#fff" stroke-width="2"><circle cx="10" cy="10" r="9"/><path d="M6 2c4 4 7 10 8 16M1 9c7 0 12-2 15-6M4 17c3-6 8-8 15-6"/></g></svg></a>
      </div>
    </div>
  </div>
</footer>
</body>
</html>
```
FILE: styles.css
```css
* { box-sizing: border-box; }
body, h1, h2, p, ul { margin: 0; padding: 0; }
body { font-family: Poppins, Inter, sans-serif; font-size: 16px; line-height: 24px; color: #111827; background: #eff6ff; }
a { color: inherit; text-decoration: none; }
svg { display: block; }

.container { max-width: 1280px; margin: 0 auto; padding: 0 16px; }

.header { background: #202020; border-bottom: 1px solid #1c1820; padding: 32px 0 39px; }
.header-row { display: flex; justify-content: space-between; align-items: center; }
.logo { display: flex; align-items: center; height: 32px; color: #fff; white-space: nowrap; }
.logo-mark { width: 32px; height: 32px; margin-right: 9px; }
.logo-x { color: #f0ce18; font: 400 26px/32px "Lilita One", "Titan One", "Fredoka One", "Bowlby One", Inter, sans-serif; -webkit-text-stroke: 1px #f0ce18; margin-right: 7px; }
.logo-shop { font: 400 22px/30px Michroma, Montserrat, "DejaVu Sans", sans-serif; }
.nav { display: flex; gap: 32px; color: #fff; font-weight: 500; }

.contact { max-width: 1280px; margin: 0 auto; padding: 80px 32px 96px; }
.intro { text-align: center; margin-bottom: 60px; }
.intro h1 { font-size: 48px; line-height: 48px; font-weight: 700; letter-spacing: -0.025em; margin-bottom: 16px; }
.intro p { font-size: 20px; line-height: 28px; color: #4b5563; }
.columns { display: grid; grid-template-columns: 1fr 1fr; gap: 32px; }
.lead { font-size: 18px; line-height: 28px; color: #4b5563; margin-bottom: 48px; }
.details { list-style: none; }
.details li { display: flex; gap: 16px; margin-bottom: 16px; }
.badge { width: 40px; height: 40px; border-radius: 4px; background: #f0ce18; display: flex; align-items: center; justify-content: center; }
.badge svg { width: 24px; height: 24px; fill: none; stroke: #000; stroke-width: 2; stroke-linecap: round; stroke-linejoin: round; }
.details h2 { font-size: 18px; line-height: 24px; font-weight: 500; margin-bottom: 8px; }
.details p { color: #4b5563; }

.form { display: flex; flex-direction: column; gap: 16px; padding: 36px 48px 32px 32px; }
.form h2 { font-size: 24px; line-height: 32px; font-weight: 700; color: #1f2937; }
.form input, .form textarea { font: inherit; width: 100%; padding: 8px; border: 1px solid #9ca3af; border-radius: 6px; background: #fff; box-shadow: 0 4px 6px -1px rgba(0,0,0,.1), 0 2px 4px -2px rgba(0,0,0,.1); }
.form input { height: 42px; padding: 7px 8px 9px; }
.form textarea { height: 138px; resize: vertical; }
.form ::placeholder { color: #9ca3af; opacity: 1; }
.form button { font: inherit; height: 48px; margin-top: 15px; border: 0; border-radius: 6px; background: #f0ce18; color: #000; }

.map { position: relative; height: 450px; overflow: hidden; font-family: Roboto, sans-serif; }
.canvas { width: 100%; height: 100%; }
.tile { overflow: visible; }
.lane { fill: none; stroke: #fff; stroke-width: 1; }
.minor { fill: none; stroke: #fff; stroke-width: 4; }
.path { fill: none; stroke: #dcefe0; stroke-width: 4; }
.road { fill: none; stroke: #fff; stroke-width: 13; stroke-linejoin: round; }
.water { fill: none; stroke: #9cc0f9; stroke-linecap: round; stroke-linejoin: round; }
.lake { fill: #9cc0f9; }
.brook { fill: none; stroke: #9cc0f9; stroke-width: 4; }
.park { fill: #b4dfc0; }
.park-line { fill: none; stroke: #5bb974; stroke-width: 3; }
.town { fill: #fdf3d8; }
.clinic { fill: #fce4e2; }
.ramp { fill: none; stroke: #f9c95c; stroke-width: 8; stroke-linejoin: round; }
.highway-edge { fill: none; stroke: #f7b52f; stroke-width: 22; stroke-linejoin: round; }
.highway { fill: none; stroke: #fddf8f; stroke-width: 14; stroke-linejoin: round; }
.rail { fill: none; stroke: #b58a2c; stroke-width: 4; }
.stop { fill: #1a73e8; }
.glyph { font-size: 10px; font-weight: 700; fill: #fff; text-anchor: middle; }
.big { font-size: 14px; }
.halo text { font-size: 14px; stroke: #fff; stroke-width: 2px; stroke-linejoin: round; paint-order: stroke; }
.halo .area text { font-size: 13px; font-weight: 500; fill: #5f6368; letter-spacing: 1px; }
.halo .area .small text { font-size: 11px; }
.halo .bn text, .halo .area .bn text { font-family: "Noto Sans Bengali", "Noto Sans", sans-serif; font-size: 11px; font-weight: 400; letter-spacing: 0; }
.halo .area .bn .bn-large { font-size: 13px; }
.transit { fill: #2f6fd0; }
.shop { fill: #3b78e7; }
.nature { fill: #188038; }
.fun { fill: #129eaf; }
.health { fill: #d93025; }
.civic { fill: #607d8b; }
.dining { fill: #e37400; }
.place { fill: #b31412; }
.halo .street text { font-size: 11px; fill: #5f6368; }
.halo .route { font-size: 12px; fill: #8a4b10; }
.river { font-size: 12px; fill: #3f72cf; }
.shield rect { fill: #6aa04a; }
.shield text { font-size: 9px; font-weight: 700; fill: #fff; }
.google { font: 600 15px "Open Sans", sans-serif; stroke: #fff; stroke-width: 2px; paint-order: stroke; }

.place-card { position: absolute; left: 10px; top: 10px; width: 302px; height: 92px; padding: 9px 19px 9px 12px; background: #fff; border-radius: 2px; box-shadow: 0 1px 4px rgba(0,0,0,.3); display: flex; justify-content: space-between; align-items: flex-start; font-size: 12px; line-height: 16px; }
.place-text { display: flex; flex-direction: column; }
.place-text strong { font-size: 14px; line-height: 18px; font-weight: 500; color: #000; }
.place-text span { color: #5b5b5b; margin: 5px 0 19px; }
.place-text a, .directions { color: #1a73e8; }
.directions { display: flex; flex-direction: column; align-items: center; gap: 3px; padding-top: 4px; }
.directions svg { width: 20px; height: 20px; }
.satellite { position: absolute; left: 10px; bottom: 10px; width: 42px; height: 42px; padding: 0; border: 2px solid #fff; border-radius: 2px; box-shadow: 0 1px 4px rgba(0,0,0,.4); background: radial-gradient(circle at 20% 35%, #34482f, transparent 40%), radial-gradient(circle at 90% 20%, #4a5c42, transparent 30%), radial-gradient(circle at 60% 60%, #7d7a6c, transparent 60%), #56604a; }
.zoom { position: absolute; right: 10px; bottom: 24px; width: 40px; background: #fff; border-radius: 2px; box-shadow: 0 1px 4px rgba(0,0,0,.3); padding: 0 5px; }
.zoom button { width: 30px; height: 41px; padding: 6px; border: 0; background: none; display: block; }
.zoom button + button { height: 40px; border-top: 1px solid #e6e6e6; }
.zoom svg { fill: #666; }
.credits { position: absolute; right: 0; bottom: 0; display: flex; gap: 12px; padding: 0 6px 0 4px; background: rgba(245,245,245,.7); font-size: 10px; line-height: 14px; color: #000; }

.footer { background: #000; color: #fff; padding: 32px 0; font-weight: 500; }
.footer-top { display: flex; justify-content: space-between; align-items: flex-start; }
.links { display: grid; grid-template-columns: repeat(3, 158px); gap: 24px; white-space: nowrap; }
.links div { display: flex; flex-direction: column; gap: 16px; }
.links h2 { font-size: 14px; line-height: 20px; font-weight: 600; margin-bottom: 8px; }
.footer hr { border: 0; border-top: 1px solid #e5e7eb; margin: 32px 0; }
.footer-bottom { display: flex; justify-content: space-between; align-items: center; font-size: 14px; line-height: 20px; font-weight: 400; }
.social { display: flex; gap: 20px; }
.social svg { width: 16px; height: 16px; fill: #fff; }
```
